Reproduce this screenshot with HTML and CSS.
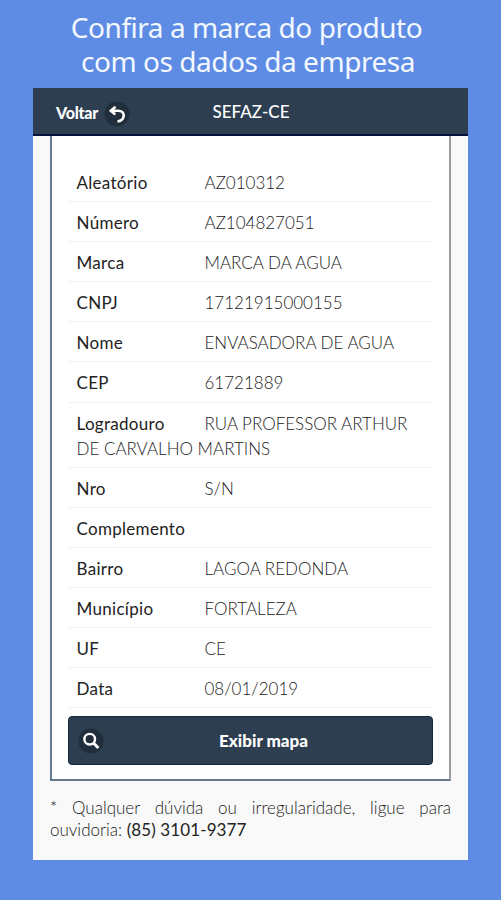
FILE: index.html
```html
<!DOCTYPE html>
<html lang="pt-BR">
<head>
  <meta charset="UTF-8">
  <meta name="viewport" content="width=device-width, initial-scale=1.0">
  <title>SEFAZ-CE</title>
  <link rel="stylesheet" href="styles.css">
</head>
<body>
  <h1 class="headline"><span>Confira a marca do produto</span><span class="line-two">com os dados da empresa</span></h1>

  <div class="screen">
    <header class="top-bar">
      <a class="back" href="#"><span>Voltar</span>
        <svg class="icon" viewBox="0 0 26 26" width="26" height="26">
          <circle cx="13" cy="13" r="12.5" fill="#202e3c"/>
          <path d="M11.5 5.8L6.8 9.8l4.5 3.8M7.5 9.8h6.6c3.4 0 5.6 1.9 5.6 4.7 0 3.2-2.4 5.4-6.2 6" fill="none" stroke="#fff" stroke-width="2.6"/>
        </svg>
      </a>
      <h2>SEFAZ-CE</h2>
    </header>

    <main class="content">
      <div class="panel">
        <ul class="details">
          <li><b>Aleatório</b>AZ010312</li>
          <li><b>Número</b>AZ104827051</li>
          <li><b>Marca</b>MARCA DA AGUA</li>
          <li><b>CNPJ</b>17121915000155</li>
          <li><b>Nome</b>ENVASADORA DE AGUA</li>
          <li><b>CEP</b>61721889</li>
          <li><b>Logradouro</b>RUA PROFESSOR ARTHUR DE CARVALHO MARTINS</li>
          <li><b>Nro</b>S/N</li>
          <li><b>Complemento</b></li>
          <li><b>Bairro</b>LAGOA REDONDA</li>
          <li><b>Município</b>FORTALEZA</li>
          <li><b>UF</b>CE</li>
          <li><b>Data</b>08/01/2019</li>
        </ul>
        <button class="map-btn">
          <svg class="icon" viewBox="0 0 26 26" width="26" height="26">
            <circle cx="13" cy="13" r="12.5" fill="#202e3c"/>
            <circle cx="11.7" cy="11.2" r="5.3" fill="none" stroke="#fff" stroke-width="2.4"/>
            <path d="M15.4 15l5 5" stroke="#fff" stroke-width="3"/>
          </svg>
          <span>Exibir mapa</span>
        </button>
      </div>
      <p class="note">* Qualquer dúvida ou irregularidade, ligue para ouvidoria: <b>(85) 3101-9377</b></p>
    </main>
  </div>
</body>
</html>
```

FILE: styles.css
```css
* {
  margin: 0;
  padding: 0;
  box-sizing: border-box;
}

body {
  height: 900px;
  overflow: hidden;
  background-color: #5e8ce4;
  font-family: 'Lato', sans-serif;
  color: #333;
}

.headline {
  height: 88px;
  padding-top: 10px;
  padding-right: 8px;
  font-family: 'Noto Sans', sans-serif;
  font-size: 28px;
  font-weight: 400;
  line-height: 34px;
  letter-spacing: -0.46px;
  text-align: center;
  white-space: nowrap;
  color: #f3f8ff;
}

.headline span {
  display: block;
}

.headline .line-two {
  padding-left: 3px;
}

.screen {
  width: 435px;
  height: 772px;
  margin-left: 33px;
  background-color: #f9f9f9;
}

/* Header */
.top-bar {
  display: grid;
  grid-template-columns: 1fr auto 1fr;
  height: 48px;
  background-color: #2c3e50;
  border-bottom: 2px solid #07123a;
  color: #fff;
}

.back {
  display: flex;
  align-items: center;
  gap: 6px;
  padding: 4px 0 0 23px;
  font-size: 16px;
  font-weight: 900;
  line-height: 20px;
  letter-spacing: -0.25px;
  color: #fff;
  text-decoration: none;
}

.back span {
  padding-bottom: 2px;
}

.icon {
  display: block;
}

.top-bar h2 {
  padding-left: 1px;
  font-size: 17px;
  font-weight: 500;
  line-height: 48px;
}

/* Panel */
.content {
  padding: 0 17px;
}

.panel {
  height: 645px;
  padding: 26px 16px 0;
  background-color: #fff;
  border: 2px solid #667a8b;
  border-top: 0;
  border-right-color: #999c9f;
}

.details {
  list-style: none;
  font-size: 17px;
  font-weight: 300;
  line-height: 25px;
}

.details li {
  min-height: 40.1px;
  padding: 8px 8px 6.1px 8.5px;
  border-bottom: 1px solid #f2f2f2;
  color: #222;
}

.details b {
  display: inline-block;
  width: 128px;
  font-weight: 400;
  letter-spacing: 0.3px;
  color: #222;
}

.map-btn {
  display: grid;
  grid-template-columns: 26px 1fr;
  align-items: center;
  width: 100%;
  height: 49px;
  margin-top: 8px;
  padding: 0 9px;
  background-color: #2c3e50;
  border: 1px solid #102a44;
  border-radius: 4px;
  font-family: inherit;
  font-size: 17px;
  font-weight: 900;
  color: #fff;
}

.note {
  margin-top: 16px;
  font-size: 17px;
  font-weight: 300;
  line-height: 22px;
  text-align: justify;
  color: #222;
}

.note b {
  font-weight: 400;
  letter-spacing: 0.1px;
}
```
